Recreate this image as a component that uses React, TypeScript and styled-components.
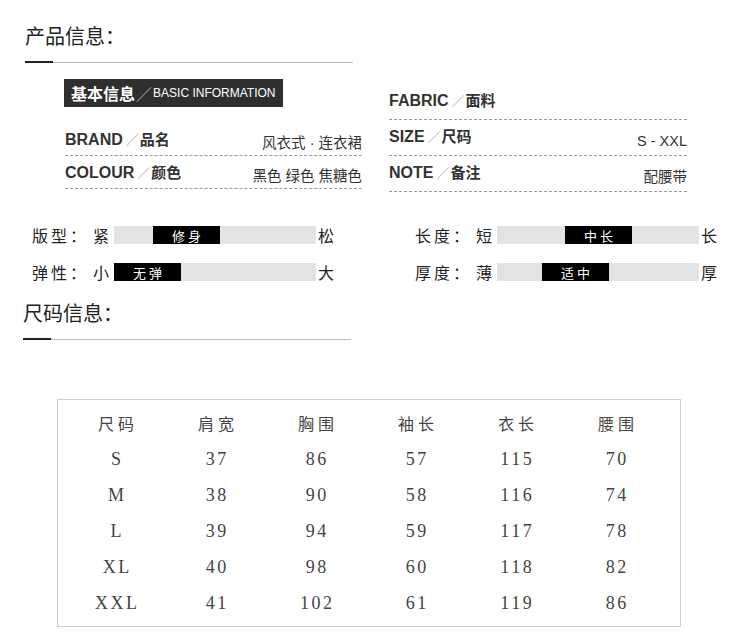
import React from "react";
import styled, { createGlobalStyle } from "styled-components";

const GlobalStyle = createGlobalStyle`
  html, body { margin: 0; padding: 0; background: #fff; }
  body {
    font-family: "Liberation Sans", "Noto Sans CJK SC", sans-serif;
    color: #333;
  }
  * { box-sizing: border-box; }
`;

const Page = styled.div`
  width: 750px;
  height: 637px;
  padding-top: 24px;
  overflow: hidden;
`;

const SectionHeader = styled.div<{ $indent: number; $width: number; $top?: number }>`
  margin-left: ${(p) => p.$indent}px;
  width: ${(p) => p.$width}px;
  margin-top: ${(p) => p.$top ?? 0}px;
`;

const SectionTitle = styled.h2`
  margin: 0;
  font-family: "Noto Sans CJK SC", sans-serif;
  font-weight: 400;
  font-size: 20px;
  line-height: 24px;
  color: #222;
`;

const Rule = styled.div<{ $gap: number }>`
  display: flex;
  align-items: center;
  height: 2px;
  margin-top: ${(p) => p.$gap}px;
`;

const RuleAccent = styled.span`
  width: 28px;
  height: 2px;
  background: #222;
`;

const RuleLine = styled.span`
  flex: 1;
  height: 1px;
  background: #bdbdbd;
`;

const InfoGrid = styled.div`
  display: grid;
  grid-template-columns: 297px 298px;
  column-gap: 27px;
  padding-left: 65px;
  align-items: start;
`;

const InfoColumn = styled.div<{ $top: number }>`
  display: flex;
  flex-direction: column;
  padding-top: ${(p) => p.$top}px;
`;

const Badge = styled.div`
  align-self: flex-start;
  display: flex;
  align-items: center;
  height: 28px;
  margin-left: -1px;
  margin-bottom: 13px;
  padding: 0 8px 0 7px;
  background: #2f2f2f;
  color: #fff;
  white-space: nowrap;
`;

const BadgeTitle = styled.span`
  font-family: "Noto Sans CJK SC", sans-serif;
  font-weight: 700;
  font-size: 16px;
`;

const BadgeSlash = styled.span`
  font-family: "Noto Sans CJK SC", sans-serif;
  color: #aaa;
  font-size: 16px;
  margin: 0 1px 0 1px;
`;

const BadgeSub = styled.span`
  font-size: 12px;
`;

const Field = styled.div<{ $h: number }>`
  display: flex;
  justify-content: space-between;
  align-items: flex-end;
  height: ${(p) => p.$h}px;
  border-bottom: 1px dashed #9a9a9a;
`;

const FieldLabel = styled.div<{ $lift: number }>`
  display: flex;
  align-items: baseline;
  line-height: 20px;
  margin-bottom: ${(p) => p.$lift}px;
  font-size: 16px;
  font-weight: 700;
  color: #333;
  white-space: nowrap;
`;

const FieldSlash = styled.span`
  font-family: "Noto Sans CJK SC", sans-serif;
  font-weight: 400;
  color: #b0b0b0;
  font-size: 13px;
  margin: 0 1px 0 3px;
`;

const FieldCn = styled.span`
  font-family: "Noto Sans CJK SC", sans-serif;
  font-size: 15px;
  font-weight: 700;
`;

const FieldValue = styled.div<{ $lift: number }>`
  font-size: 14.5px;
  line-height: 18px;
  margin-bottom: ${(p) => p.$lift}px;
  color: #333;
  white-space: nowrap;
`;

const SliderGrid = styled.div`
  display: grid;
  grid-template-columns: 383px 1fr;
  row-gap: 19px;
  padding-left: 32px;
  margin-top: 34px;
`;

const SliderRow = styled.div`
  display: flex;
  align-items: center;
  height: 18px;
  font-family: "Noto Sans CJK SC", sans-serif;
  color: #222;
`;

const SliderLabel = styled.span`
  width: 58px;
  font-size: 16px;
  letter-spacing: 3px;
  white-space: nowrap;
`;

const SliderStart = styled.span`
  width: 24px;
  padding-left: 3px;
  font-size: 16px;
`;

const SliderEnd = styled.span`
  margin-left: 2px;
  font-size: 16px;
`;

const Track = styled.div`
  display: flex;
  width: 202px;
  height: 18px;
  background: #e3e3e3;
`;

const Thumb = styled.div<{ $offset: number }>`
  display: flex;
  align-items: center;
  justify-content: center;
  margin-left: ${(p) => p.$offset}px;
  width: 67px;
  height: 100%;
  padding-left: 3px;
  background: #000;
  color: #fff;
  font-size: 13px;
  letter-spacing: 3px;
`;

const SizeTable = styled.div`
  display: grid;
  grid-template-columns: repeat(6, 100px);
  grid-auto-rows: 36px;
  align-items: center;
  width: 624px;
  margin: 59px 0 0 57px;
  padding: 5px 15px 5px 8px;
  border: 1px solid #cfcfcf;
`;

const HeadCell = styled.div`
  text-align: center;
  padding-left: 4px;
  font-family: "Noto Sans CJK SC", sans-serif;
  font-size: 16px;
  letter-spacing: 4px;
  color: #444;
`;

const Cell = styled.div`
  text-align: center;
  padding-left: 2.5px;
  font-family: "Liberation Serif", serif;
  font-size: 18px;
  letter-spacing: 2.5px;
  color: #444;
`;

type FieldData = { en: string; cn: string; value?: string; h: number };

const leftFields: FieldData[] = [
  { en: "BRAND", cn: "品名", value: "风衣式 · 连衣裙", h: 36 },
  { en: "COLOUR", cn: "颜色", value: "黑色 绿色 焦糖色", h: 33 },
];

const rightFields: FieldData[] = [
  { en: "FABRIC", cn: "面料", h: 36 },
  { en: "SIZE", cn: "尺码", value: "S - XXL", h: 36 },
  { en: "NOTE", cn: "备注", value: "配腰带", h: 36 },
];

type SliderData = { label: string; start: string; end: string; mark: string; offset: number };

const sliders: SliderData[] = [
  { label: "版型：", start: "紧", end: "松", mark: "修身", offset: 39 },
  { label: "长度：", start: "短", end: "长", mark: "中长", offset: 68 },
  { label: "弹性：", start: "小", end: "大", mark: "无弹", offset: 0 },
  { label: "厚度：", start: "薄", end: "厚", mark: "适中", offset: 45 },
];

const headers = ["尺码", "肩宽", "胸围", "袖长", "衣长", "腰围"];
const rows = [
  ["S", "37", "86", "57", "115", "70"],
  ["M", "38", "90", "58", "116", "74"],
  ["L", "39", "94", "59", "117", "78"],
  ["XL", "40", "98", "60", "118", "82"],
  ["XXL", "41", "102", "61", "119", "86"],
];

function InfoField({ f, labelLift, valueLift }: { f: FieldData; labelLift: number; valueLift: number }) {
  return (
    <Field $h={f.h}>
      <FieldLabel $lift={labelLift}>
        {f.en}
        <FieldSlash>／</FieldSlash>
        <FieldCn>{f.cn}</FieldCn>
      </FieldLabel>
      {f.value && <FieldValue $lift={valueLift}>{f.value}</FieldValue>}
    </Field>
  );
}

export default function App() {
  return (
    <Page>
      <GlobalStyle />
      <SectionHeader $indent={25} $width={328}>
        <SectionTitle>产品信息：</SectionTitle>
        <Rule $gap={13}>
          <RuleAccent />
          <RuleLine />
        </Rule>
      </SectionHeader>

      <InfoGrid>
        <InfoColumn $top={16}>
          <Badge>
            <BadgeTitle>基本信息</BadgeTitle>
            <BadgeSlash>／</BadgeSlash>
            <BadgeSub>BASIC INFORMATION</BadgeSub>
          </Badge>
          {leftFields.map((f) => (
            <InfoField key={f.en} f={f} labelLift={5} valueLift={3} />
          ))}
        </InfoColumn>
        <InfoColumn $top={21}>
          {rightFields.map((f) => (
            <InfoField key={f.en} f={f} labelLift={8} valueLift={5} />
          ))}
        </InfoColumn>
      </InfoGrid>

      <SliderGrid>
        {sliders.map((s) => (
          <SliderRow key={s.label}>
            <SliderLabel>{s.label}</SliderLabel>
            <SliderStart>{s.start}</SliderStart>
            <Track>
              <Thumb $offset={s.offset}>{s.mark}</Thumb>
            </Track>
            <SliderEnd>{s.end}</SliderEnd>
          </SliderRow>
        ))}
      </SliderGrid>

      <SectionHeader $indent={23} $width={328} $top={20}>
        <SectionTitle>尺码信息：</SectionTitle>
        <Rule $gap={13}>
          <RuleAccent />
          <RuleLine />
        </Rule>
      </SectionHeader>

      <SizeTable>
        {headers.map((h) => (
          <HeadCell key={h}>{h}</HeadCell>
        ))}
        {rows.map((r) =>
          r.map((c, i) => <Cell key={r[0] + i}>{c}</Cell>)
        )}
      </SizeTable>
    </Page>
  );
}
